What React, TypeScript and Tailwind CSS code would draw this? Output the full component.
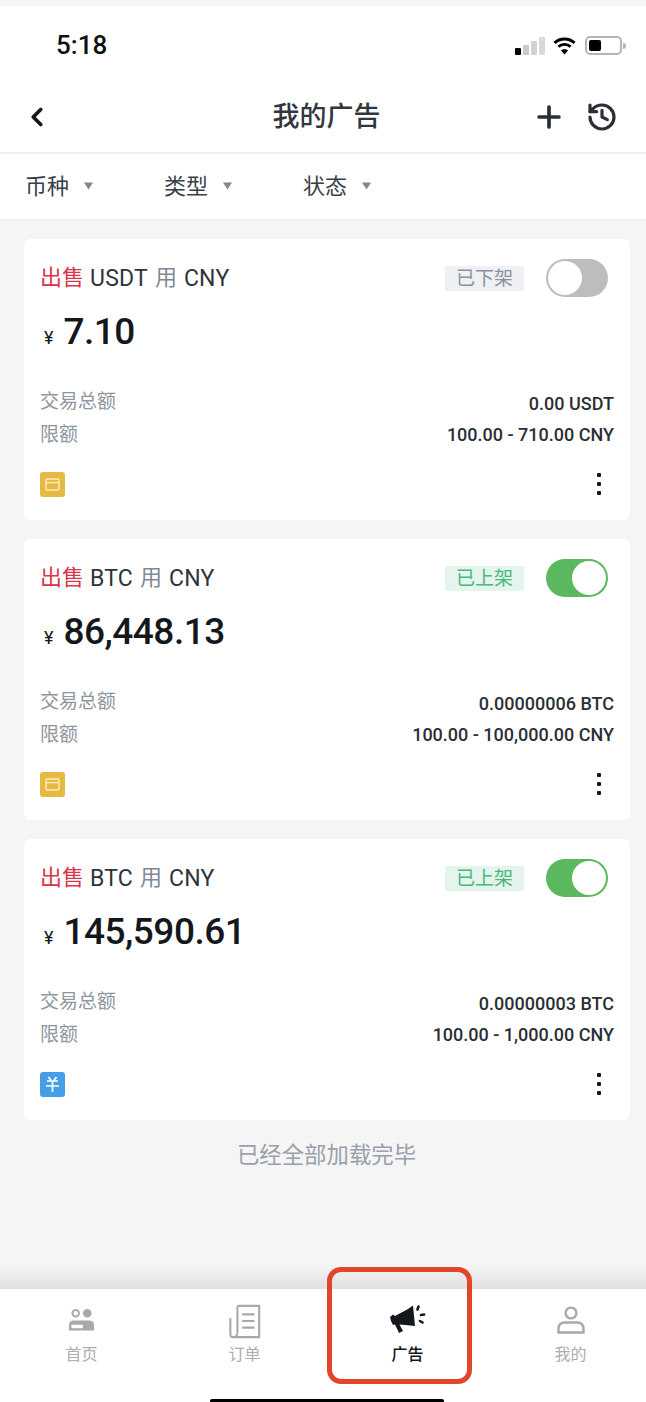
import { ChevronLeft, History, Plus } from "lucide-react";

const FONT = "font-['Roboto','Noto_Sans_CJK_SC',sans-serif]";

interface Ad {
  coin: string;
  listed: boolean;
  price: string;
  total: string;
  limit: string;
  pay: "card" | "alipay";
}

const ads: Ad[] = [
  { coin: "USDT", listed: false, price: "7.10", total: "0.00 USDT", limit: "100.00 - 710.00 CNY", pay: "card" },
  { coin: "BTC", listed: true, price: "86,448.13", total: "0.00000006 BTC", limit: "100.00 - 100,000.00 CNY", pay: "card" },
  { coin: "BTC", listed: true, price: "145,590.61", total: "0.00000003 BTC", limit: "100.00 - 1,000.00 CNY", pay: "alipay" },
];

const StatusIcons = () => (
  <div className="flex items-center">
    <svg width="30" height="18" viewBox="0 0 30 18" className="mr-[7px]">
      <rect x="0" y="11" width="6" height="7" rx="1" fill="#000" />
      <rect x="8" y="8" width="6" height="10" rx="1" fill="#c9c9c9" />
      <rect x="16" y="4" width="6" height="14" rx="1" fill="#d2d2d2" />
      <rect x="24" y="0" width="6" height="18" rx="1" fill="#d9d9d9" />
    </svg>
    <svg width="25" height="19" viewBox="0 0 22 18" className="mr-[8px]">
      <path d="M1.5 6.5C6.8 1.5 15.2 1.5 20.5 6.5" fill="none" stroke="#000" strokeWidth="2.8" />
      <path d="M5.2 10.2C8.4 7.2 13.6 7.2 16.8 10.2" fill="none" stroke="#000" strokeWidth="2.8" />
      <path d="M11 17.5L7.6 13.8C9.6 12 12.4 12 14.4 13.8Z" fill="#000" />
    </svg>
    <div className="w-[37px] h-[19px] rounded-[5px] border-2 border-[#b5b5b5] p-[2px]">
      <div className="w-[12px] h-full rounded-[2px] bg-black" />
    </div>
    <div className="w-[3px] h-[6px] ml-[1px] rounded-r-full bg-[#b5b5b5]" />
  </div>
);

const Filter = ({ label }: { label: string }) => (
  <div className="w-[139px] flex items-center">
    <span className="text-[22px] leading-none text-[#3a3f47]">{label}</span>
    <svg width="11" height="8" viewBox="0 0 10 8" className="ml-[14px] mb-[3px]">
      <path d="M0.5 0.5H9.5L5 7.5Z" fill="#7f8790" />
    </svg>
  </div>
);

const Toggle = ({ on }: { on: boolean }) => (
  <div className={`w-[62px] h-[38px] rounded-full p-[2px] flex ${on ? "bg-[#5cb85f] justify-end" : "bg-[#bdbdbd] justify-start"}`}>
    <div className="w-[34px] h-[34px] rounded-full bg-white" />
  </div>
);

const PayBadge = ({ pay }: { pay: Ad["pay"] }) =>
  pay === "card" ? (
    <div className="w-[25px] h-[25px] rounded-[3px] bg-[#e6ba42] flex items-center justify-center">
      <svg width="15" height="13" viewBox="0 0 15 13">
        <rect x="1" y="1" width="13" height="11" rx="1" fill="none" stroke="#fbecc0" strokeWidth="1.4" />
        <path d="M1 4.6H14" stroke="#fbecc0" strokeWidth="1.4" />
      </svg>
    </div>
  ) : (
    <div className="w-[25px] h-[25px] rounded-[3px] bg-[#469fe6] flex items-center justify-center">
      <svg width="15" height="17" viewBox="0 0 15 17">
        <path d="M3.5 1L6 4.2M11.5 1L9 4.2M2 5H13M1 10H14M7.5 5V16" fill="none" stroke="#fff" strokeWidth="1.7" />
      </svg>
    </div>
  );

const AdCard = ({ ad }: { ad: Ad }) => (
  <div className="h-[281px] shrink-0 rounded-[6px] bg-white px-[16px] flex flex-col">
    <div className="h-[78px] flex items-center justify-between">
      <div className="text-[22px] leading-none text-[#2f343b] flex items-center">
        <span className="text-[#d9354c]">出售</span>
        <span className="ml-[6px] text-[23px] tracking-[0.2px]">{ad.coin}</span>
        <span className="ml-[7px] text-[#7f8893]">用</span>
        <span className="ml-[7px] text-[23px] tracking-[0.2px]">CNY</span>
      </div>
      <div className="flex items-center pr-[6px]">
        <div className={`w-[79px] h-[25px] rounded-[2px] flex items-center justify-center text-[19px] leading-none ${ad.listed ? "bg-[#e3f5ec] text-[#4cb77a]" : "bg-[#eef0f3] text-[#8b929b]"}`}>
          {ad.listed ? "已上架" : "已下架"}
        </div>
        <div className="ml-[22px]">
          <Toggle on={ad.listed} />
        </div>
      </div>
    </div>
    <div className="flex items-baseline h-[40px] -mt-[4px] text-[#14181d]">
      <span className="text-[18px] leading-none ml-[4px]">¥</span>
      <span className="ml-[10px] text-[37px] leading-none font-medium tracking-[-0.5px]">{ad.price}</span>
    </div>
    <div className="mt-[32px] h-[34px] flex items-center justify-between">
      <span className="text-[19px] text-[#8e959e]">交易总额</span>
      <span className="mt-[2px] text-[18px] font-medium text-[#2a2f36]">{ad.total}</span>
    </div>
    <div className="h-[33px] flex items-center justify-between">
      <span className="text-[19px] text-[#8e959e]">限额</span>
      <span className="mb-[2px] text-[18px] font-medium text-[#2a2f36]">{ad.limit}</span>
    </div>
    <div className="mt-[20px] flex items-center justify-between pr-[13px]">
      <PayBadge pay={ad.pay} />
      <div className="flex flex-col gap-[5px] mb-[2px]">
        <div className="w-[4px] h-[4px] bg-[#14181d] rounded-[1px]" />
        <div className="w-[4px] h-[4px] bg-[#14181d] rounded-[1px]" />
        <div className="w-[4px] h-[4px] bg-[#14181d] rounded-[1px]" />
      </div>
    </div>
  </div>
);

const HomeIcon = () => (
  <svg width="27" height="24" viewBox="0 0 28 24">
    <circle cx="8" cy="5" r="3.4" fill="none" stroke="#a9a9a9" strokeWidth="2" />
    <circle cx="20" cy="5" r="4.4" fill="#a9a9a9" />
    <path d="M1 23V17C1 14 3 12.5 6 12.5H22C25 12.5 27 14 27 17V23Z" fill="#a9a9a9" />
    <rect x="3.5" y="17" width="12" height="3.6" rx="1" fill="#fff" />
  </svg>
);

const OrderIcon = () => (
  <svg width="34" height="35" viewBox="0 0 34 37" fill="none" stroke="#a9a9a9" strokeWidth="2.2" className="mt-[2px]">
    <path d="M9 2H32V35H4C2.5 35 1.5 34 1.5 32.5V15" />
    <path d="M9 2V30C9 33 7 35 4.5 35" />
    <path d="M14 11H27M14 18H27M14 25H27" />
  </svg>
);

const AdIcon = () => (
  <svg width="36" height="30" viewBox="0 0 36 30">
    <path d="M0 12L3 9.5L5 11L18 4L23 0.5L25 21L15 20L9.5 19.5L13 26L9 28L5 19.5L3 20L1 16Z" fill="#14181d" />
    <path d="M28.5 1.5L27.5 4.5M34 9.5L31 10M32.5 17.5L30 16" stroke="#14181d" strokeWidth="2.6" strokeLinecap="round" fill="none" />
  </svg>
);

const MeIcon = () => (
  <svg width="28" height="28" viewBox="0 0 28 28" fill="none" stroke="#a9a9a9" strokeWidth="2.4">
    <circle cx="14" cy="7" r="5.4" />
    <path d="M1.5 26.5V23C1.5 19 4 16.5 8 16.5H20C24 16.5 26.5 19 26.5 23V26.5Z" />
  </svg>
);

const tabs = [
  { label: "首页", icon: <HomeIcon />, active: false },
  { label: "订单", icon: <OrderIcon />, active: false },
  { label: "广告", icon: <AdIcon />, active: true },
  { label: "我的", icon: <MeIcon />, active: false },
];

export default function App() {
  return (
    <div className={`relative w-[646px] h-[1402px] overflow-hidden bg-[#f5f5f6] flex flex-col ${FONT}`}>
      <div className="h-[6px] bg-[#f3f4f6]" />
      <div className="bg-white">
        <div className="h-[78px] flex items-center justify-between pl-[56px] pr-[20px] pt-[1px]">
          <span className="text-[26px] font-medium text-[#111]">5:18</span>
          <StatusIcons />
        </div>
        <div className="relative h-[68px] flex items-center justify-between pl-[22px] pr-[28px] pb-[2px]">
          <ChevronLeft size={30} strokeWidth={3} className="text-[#15191e]" />
          <span className="absolute left-[7px] right-0 text-center text-[27px] font-medium text-[#32373e] pointer-events-none">我的广告</span>
          <div className="flex items-center gap-[20px]">
            <Plus size={34} strokeWidth={2.6} className="text-[#2a2f36]" />
            <History size={32} strokeWidth={2.4} className="text-[#2a2f36]" />
          </div>
        </div>
      </div>
      <div className="h-[2px] bg-[#eeeff1]" />
      <div className="h-[65px] bg-white flex items-center pl-[25px] pt-[1px]">
        <Filter label="币种" />
        <Filter label="类型" />
        <Filter label="状态" />
      </div>
      <div className="h-[2px] bg-[#eeeff1]" />
      <div className="flex-1 min-h-0 pl-[24px] pr-[16px] pt-[18px] flex flex-col gap-[19px]">
        {ads.map((ad, i) => (
          <AdCard key={i} ad={ad} />
        ))}
        <p className="text-center text-[22.4px] leading-none text-[#98a0a9] mt-[5px] -ml-[1px]">已经全部加载完毕</p>
      </div>
      <div className="h-[24px] -mt-[24px] bg-gradient-to-b from-transparent to-[#e0e0e0]" />
      <div className="h-[113px] bg-white flex flex-col">
        <div className="flex pt-[12px]">
          {tabs.map((t) => (
            <div key={t.label} className="w-[163px] shrink-0 flex flex-col items-center">
              <div className="h-[38px] flex items-center justify-center">{t.icon}</div>
              <span className={`mt-[8px] text-[16px] leading-none ${t.active ? "font-medium text-[#14181d]" : "text-[#adadad]"}`}>{t.label}</span>
            </div>
          ))}
        </div>
        <div className="mt-auto ml-[210px] w-[234px] h-[3px] rounded-t-[2px] bg-black" />
      </div>
      <div className="absolute left-[327px] top-[1267px] w-[145px] h-[117px] rounded-[14px] border-[5px] border-[#e2452c]" />
    </div>
  );
}
